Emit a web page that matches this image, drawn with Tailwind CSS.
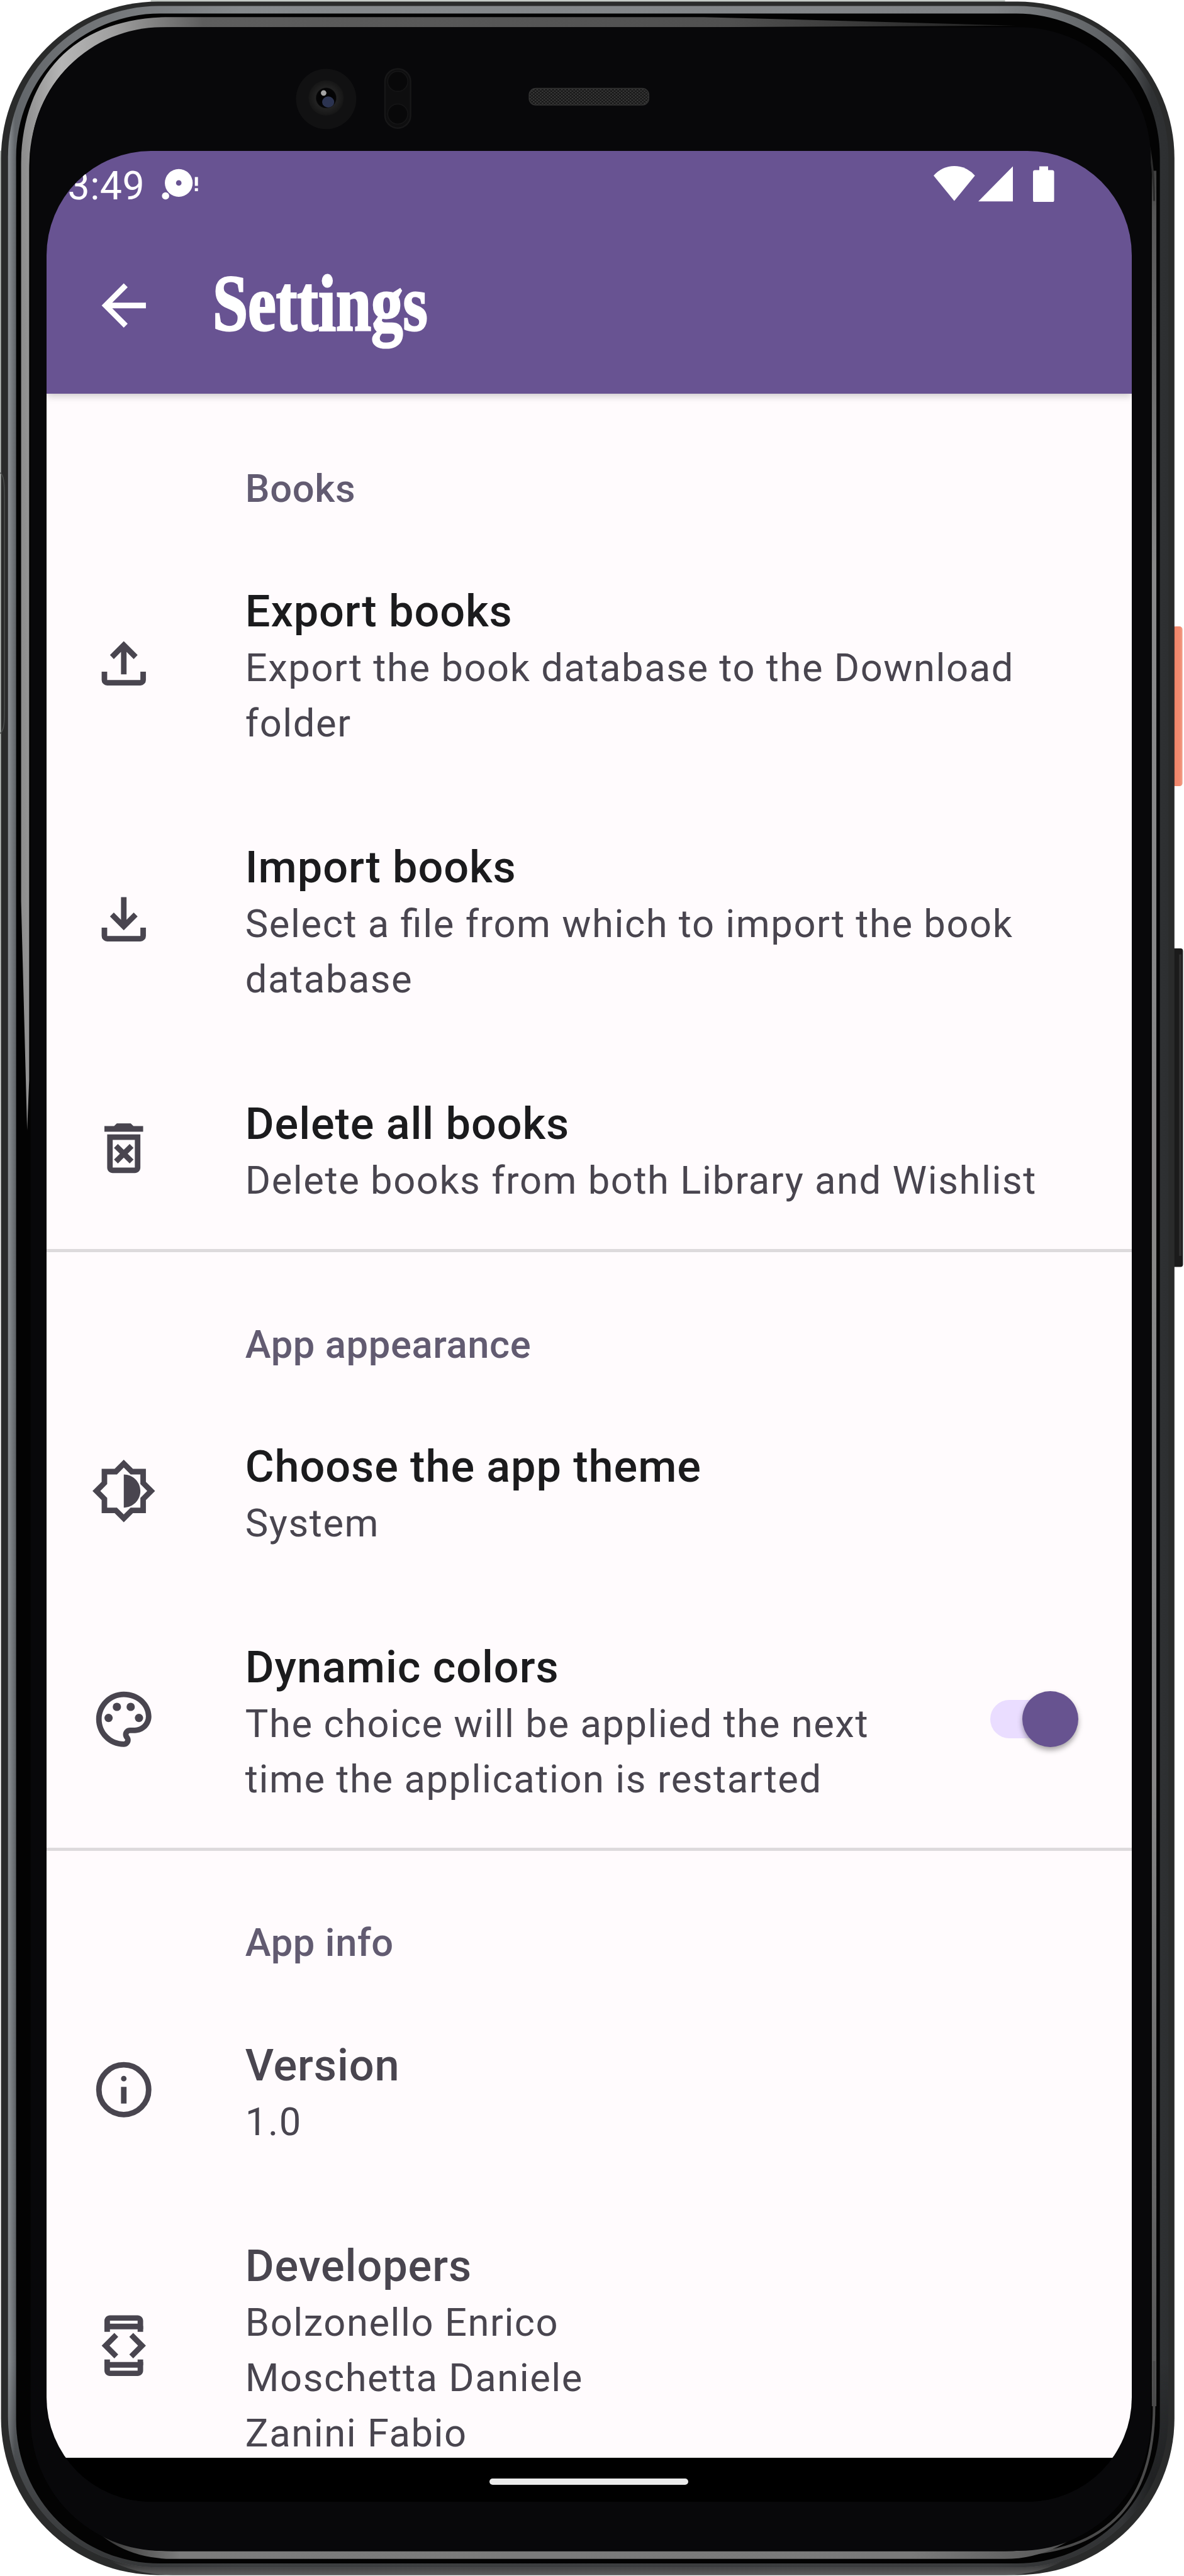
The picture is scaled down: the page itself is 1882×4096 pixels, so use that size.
<!DOCTYPE html>
<html lang="en">
<head>
<meta charset="utf-8">
<title>Settings</title>
<script src="https://cdn.jsdelivr.net/npm/@tailwindcss/browser@4"></script>
</head>
<body class="bg-white">
<div class="relative w-[1882px] h-[4096px] overflow-hidden font-[Roboto,sans-serif]">

  <!-- Phone body -->
  <svg class="absolute inset-0 w-full h-full" viewBox="0 0 2356 5128" preserveAspectRatio="none" fill="none">
    <defs>
      <linearGradient id="band" gradientUnits="userSpaceOnUse" x1="16" y1="0" x2="2326" y2="0">
        <stop offset="0" stop-color="#8d9296"/><stop offset=".006" stop-color="#62666a"/><stop offset=".05" stop-color="#6e7174"/><stop offset=".2" stop-color="#85898c"/><stop offset=".85" stop-color="#808386"/><stop offset=".96" stop-color="#5a5d60"/><stop offset=".985" stop-color="#2f3133"/><stop offset="1" stop-color="#2d2f31"/>
      </linearGradient>
      <linearGradient id="bandEnd" gradientUnits="userSpaceOnUse" x1="0" y1="4700" x2="0" y2="5112">
        <stop offset="0" stop-color="#000" stop-opacity="0"/><stop offset="1" stop-color="#000" stop-opacity=".55"/>
      </linearGradient>
      <linearGradient id="glassTop" gradientUnits="userSpaceOnUse" x1="42" y1="0" x2="2050" y2="0">
        <stop offset="0" stop-color="#8c8c8c"/><stop offset=".04" stop-color="#b5b5b5"/><stop offset=".09" stop-color="#a0a0a0"/><stop offset=".18" stop-color="#5e5e5e"/><stop offset=".7" stop-color="#505050"/><stop offset="1" stop-color="#1c1c1c"/>
      </linearGradient>
      <linearGradient id="glassBottom" gradientUnits="userSpaceOnUse" x1="150" y1="0" x2="2230" y2="0">
        <stop offset="0" stop-color="#1a1a1a"/><stop offset=".1" stop-color="#7c7c7c"/><stop offset=".8" stop-color="#7a7a7a"/><stop offset=".93" stop-color="#5c5c5c"/><stop offset="1" stop-color="#1a1a1a"/>
      </linearGradient>
      <linearGradient id="glassRight" gradientUnits="userSpaceOnUse" x1="0" y1="180" x2="0" y2="4990">
        <stop offset="0" stop-color="#111"/><stop offset=".05" stop-color="#555"/><stop offset=".2" stop-color="#888"/><stop offset=".7" stop-color="#868686"/><stop offset=".95" stop-color="#555"/><stop offset="1" stop-color="#111"/>
      </linearGradient>
      <linearGradient id="sheen" gradientUnits="userSpaceOnUse" x1="0" y1="300" x2="0" y2="2700">
        <stop offset="0" stop-color="#b8bdba"/><stop offset=".6" stop-color="#b8bdba"/><stop offset="1" stop-color="#fff"/>
      </linearGradient>
      <linearGradient id="edgeBottom" gradientUnits="userSpaceOnUse" x1="0" y1="5090" x2="0" y2="5127">
        <stop offset="0" stop-color="#1d1e1f"/><stop offset="1" stop-color="#606060"/>
      </linearGradient>
      <linearGradient id="power" gradientUnits="userSpaceOnUse" x1="2334" y1="0" x2="2353" y2="0">
        <stop offset="0" stop-color="#d9694f"/><stop offset=".25" stop-color="#f0866a"/><stop offset=".75" stop-color="#f28b70"/><stop offset="1" stop-color="#f0a08c"/>
      </linearGradient>
      <radialGradient id="lens"><stop offset="0" stop-color="#000"/><stop offset=".55" stop-color="#050506"/><stop offset=".6" stop-color="#222"/><stop offset="1" stop-color="#161616"/></radialGradient>
      <pattern id="mesh" width="7" height="6" patternUnits="userSpaceOnUse"><rect width="7" height="6" fill="#151515"/><rect width="3" height="3" fill="#3c3c3c"/><rect x="3.500" y="3" width="3" height="3" fill="#3c3c3c"/></pattern>
    </defs>
    <rect x="0" y="300" width="3" height="2400" fill="url(#sheen)"/>
    <rect x="300" y="0" width="1700" height="5" fill="#c5cbc7"/>
    <rect x="2333" y="1247" width="20" height="318" rx="6" fill="url(#power)"/>
    <rect x="2330" y="1888" width="24" height="634" rx="5" fill="#1b1b1b"/>
    <rect x="2346" y="1900" width="5" height="600" fill="#2e2e2e"/>
    <rect x="2" y="3" width="2335" height="5123" rx="312" fill="#2a2b2b"/>
    <path d="M150 5040Q220 5126 344 5126H2000Q2110 5126 2190 5040L2120 5080H220Z" fill="url(#edgeBottom)"/>
    <rect x="16" y="12" width="2309" height="5099" rx="300" fill="url(#band)"/>
    <rect x="16" y="12" width="2309" height="5099" rx="300" fill="url(#bandEnd)"/>
    <rect x="32" y="27" width="2276" height="5076" rx="286" fill="#030303"/>
    <path d="M2296.500 340V4790" stroke="url(#glassRight)" stroke-width="9"/>
    <path d="M2296.500 4700V4790Q2296 5086 2000 5086" stroke="#4a4a4a" stroke-width="5"/>
    <path d="M2235 170Q2296 250 2296.500 400" stroke="#2c2c2c" stroke-width="4"/>
    <path d="M42 1794V330C42 150 150 34 340 34H1400L2020 51L1400 54H345C180 54 58 160 58 340V2150L54 2250Z" fill="url(#glassTop)"/>
    <path d="M150 4990Q220 5094 344 5094H2000Q2130 5094 2230 4960Q2130 5078 2000 5079H344Q220 5079 150 4990Z" fill="url(#glassBottom)"/>
    <path d="M0 941C9 945 9 970 9 1000V1400C9 1435 9 1455 0 1460" stroke="#4a4d4c" stroke-width="2"/>
    <rect x="61" y="54" width="2229" height="5024" rx="262" fill="#08080a"/>
    <circle cx="649" cy="197" r="60" fill="#111112"/>
    <circle cx="649" cy="195" r="35" fill="url(#lens)"/>
    <ellipse cx="653" cy="203" rx="12" ry="11" fill="#2b3350"/>
    <circle cx="644" cy="185" r="5.500" fill="#a5a5a5"/>
    <rect x="766" y="137" width="51" height="118" rx="25.500" fill="#0e0e0f" stroke="#171718" stroke-width="3"/>
    <circle cx="791.500" cy="162" r="20" fill="#080809" stroke="#151516" stroke-width="2"/>
    <circle cx="791.500" cy="227" r="20" fill="#080809" stroke="#151516" stroke-width="2"/>
    <rect x="1053" y="176" width="238" height="33" rx="13" fill="url(#mesh)" stroke="#303030" stroke-width="2"/>
  </svg>

  <!-- Screen -->
  <div class="relative mt-[239.6px] ml-[73.5px] w-[1725.5px] h-[3738.4px] rounded-[166px] overflow-hidden bg-black flex flex-col">
    <header class="relative z-10 shrink-0 h-[386.7px] bg-[#685392] text-white shadow-[0_3px_12px_rgba(0,0,0,0.22)]">
      <div class="h-[105.4px] pt-[24px] pl-[34px] pr-[123px] flex items-start">
        <span class="w-[149.7px] text-[62.5px] leading-[64px] tracking-[0.5px]">3:49</span>
        <svg class="w-[58.3px] h-[57.5px]" viewBox="322 330 73 72" fill="#fff">
          <path fill-rule="evenodd" d="M356 336a27.700 27.700 0 1 1 0 55.400a27.700 27.700 0 0 1 0-55.400zM356 358.200a5.500 5.500 0 1 0 0 11a5.500 5.500 0 0 0 0-11z"/>
          <circle cx="329.700" cy="389.500" r="7.200"/>
          <path d="M388 352h6.200v17.500h-6.200zM388 374h6.200v6h-6.200z"/>
        </svg>
        <div class="ml-auto flex gap-[5.7px]">
          <svg class="w-[65.7px] h-[57.5px]" viewBox="1857.500 330 82.300 72" fill="#fff"><path d="M1898.700 399.500L1857.500 349Q1875 330 1898.700 330T1939.800 349Z"/></svg>
          <svg class="w-[55.200px] h-[57.5px]" viewBox="1947 330 69 72" fill="#fff"><path d="M1947 400.500H2016V330.500Z"/></svg>
          <svg class="ml-[26.300px] w-[33.600px] h-[57.5px]" viewBox="2056 330 42 72" fill="#fff"><path d="M2068.500 338V330.500H2086V338H2094Q2098 338 2098 342V398Q2098 402 2094 402H2060Q2056 402 2056 398V342Q2056 338 2060 338Z"/></svg>
        </div>
      </div>
      <div class="h-[281.3px] pl-[70.3px] flex items-center">
        <svg class="w-[105.5px] h-[105.5px]" viewBox="0 0 24 24" fill="#fff"><path d="M20 11H7.830l5.590-5.590L12 4l-8 8 8 8 1.410-1.410L7.830 13H20v-2z"/></svg>
        <h1 class="ml-[89px] pb-[5px] origin-left scale-x-[0.8] font-['Liberation_Serif',serif] font-bold text-[126px] leading-[140px] [-webkit-text-stroke:3px_white]">Settings</h1>
      </div>
    </header>

    <main class="h-[3281.400px] shrink-0 overflow-hidden bg-[#fffbfd] text-[#49454f] text-[61.5px] leading-[88px] tracking-[1.54px] [font-feature-settings:'liga']">
      <section class="pt-[107px]">
        <h2 class="pl-[316.3px] mb-[36.500px] font-medium tracking-[0.6px] text-[#625b71]">Books</h2>
        <div class="flex items-center py-[71.75px] pl-[70.3px]">
          <svg class="w-[105.5px] h-[105.5px] mb-[14px] shrink-0" viewBox="0 0 24 24" fill="currentColor"><path d="M11 16V7.850L8.400 10.450 7 9l5-5 5 5-1.400 1.450L13 7.850V16zM6 20q-.825 0-1.412-.587Q4 18.825 4 18v-3h2v3h12v-3h2v3q0 .825-.587 1.413Q18.825 20 18 20z"/></svg>
          <div class="ml-[140.500px]"><h3 class="-mt-[2px] mb-[2px] text-[70.3px] font-medium tracking-[0.9px] text-[#1b1b1d]">Export books</h3><p>Export the book database to the Download<br>folder</p></div>
        </div>
        <div class="flex items-center py-[71.75px] pl-[70.3px]">
          <svg class="w-[105.5px] h-[105.5px] mb-[14px] shrink-0" viewBox="0 0 24 24" fill="currentColor"><path d="M12 16l-5-5 1.400-1.450 2.600 2.600V4h2v8.150l2.600-2.600L17 11zM6 20q-.825 0-1.412-.587Q4 18.825 4 18v-3h2v3h12v-3h2v3q0 .825-.587 1.413Q18.825 20 18 20z"/></svg>
          <div class="ml-[140.500px]"><h3 class="-mt-[2px] mb-[2px] text-[70.3px] font-medium tracking-[0.9px] text-[#1b1b1d]">Import books</h3><p>Select a file from which to import the book<br>database</p></div>
        </div>
        <div class="flex items-center pt-[71.75px] pb-[65px] pl-[70.3px]">
          <svg class="w-[105.5px] h-[105.5px] mb-[14px] shrink-0" viewBox="0 0 24 24" fill="currentColor"><path d="M14.120 10.470L12 12.590l-2.130-2.120-1.410 1.410L10.590 14l-2.120 2.120 1.410 1.410L12 15.410l2.120 2.120 1.410-1.410L13.410 14l2.120-2.120zM15.500 4l-1-1h-5l-1 1H5v2h14V4zM6 19c0 1.100.9 2 2 2h8c1.100 0 2-.9 2-2V7H6zM8 9h8v10H8z"/></svg>
          <div class="ml-[140.500px]"><h3 class="-mt-[2px] mb-[2px] text-[70.3px] font-medium tracking-[0.9px] text-[#1b1b1d]">Delete all books</h3><p>Delete books from both Library and Wishlist</p></div>
        </div>
      </section>

      <section class="border-t-[5px] border-[#dddadc] pt-[103px]">
        <h2 class="pl-[316.3px] mb-[36.500px] font-medium tracking-[0.6px] text-[#625b71]">App appearance</h2>
        <div class="flex items-center py-[71.75px] pl-[70.3px]">
          <svg class="w-[105.5px] h-[105.5px] mb-[14px] shrink-0 overflow-visible" viewBox="0 0 24 24" fill="currentColor"><path d="M20 15.310L23.310 12 20 8.690V4h-4.690L12 .69 8.690 4H4v4.690L.69 12 4 15.310V20h4.690L12 23.310 15.310 20H20zM18 14.480V18h-3.520L12 20.480 9.520 18H6v-3.520L3.520 12 6 9.520V6h3.520L12 3.520 14.480 6H18v3.520L20.480 12zM12 6v12c3.310 0 6-2.690 6-6s-2.690-6-6-6z" fill-rule="evenodd"/></svg>
          <div class="ml-[140.500px]"><h3 class="-mt-[2px] mb-[2px] text-[70.3px] font-medium tracking-[0.9px] text-[#1b1b1d]">Choose the app theme</h3><p>System</p></div>
        </div>
        <div class="flex items-center pt-[71.75px] pb-[65px] pl-[70.3px] pr-[84.600px]">
          <svg class="w-[105.5px] h-[105.5px] mb-[15px] shrink-0" viewBox="0 0 24 24" fill="currentColor"><path d="M12 22C6.490 22 2 17.510 2 12S6.490 2 12 2s10 4.040 10 9c0 3.310-2.690 6-6 6h-1.770c-.28 0-.5.22-.5.5 0 .12.050.23.130.33.410.47.640 1.060.640 1.670A2.500 2.500 0 0 1 12 22zm0-18c-4.410 0-8 3.590-8 8s3.590 8 8 8c.28 0 .5-.22.5-.5a.54.54 0 0 0-.14-.35c-.41-.46-.63-1.050-.63-1.650a2.500 2.500 0 0 1 2.500-2.500H16c2.210 0 4-1.790 4-4 0-3.860-3.590-7-8-7z"/><circle cx="6.500" cy="11.500" r="1.500"/><circle cx="9.500" cy="7.500" r="1.500"/><circle cx="14.500" cy="7.500" r="1.500"/><circle cx="17.500" cy="11.500" r="1.500"/></svg>
          <div class="ml-[140.500px]"><h3 class="-mt-[2px] mb-[2px] text-[70.3px] font-medium tracking-[0.9px] text-[#1b1b1d]">Dynamic colors</h3><p>The choice will be applied the next<br>time the application is restarted</p></div>
          <div class="ml-auto mb-[16px] flex h-[60.700px] w-[140.800px] items-center justify-end rounded-full bg-[#eaddff]">
            <span class="size-[89.500px] shrink-0 rounded-full bg-[#675390] shadow-[0_5px_8px_rgba(0,0,0,0.35)]"></span>
          </div>
        </div>
      </section>

      <section class="border-t-[5px] border-[#dddadc] pt-[102px]">
        <h2 class="pl-[316.3px] mb-[36.500px] font-medium tracking-[0.6px] text-[#625b71]">App info</h2>
        <div class="flex items-center py-[71.75px] pl-[70.3px]">
          <svg class="w-[105.5px] h-[105.5px] mb-[14px] shrink-0" viewBox="0 0 24 24" fill="currentColor"><path d="M11 17h2v-6h-2zM12 9q.425 0 .713-.288Q13 8.425 13 8t-.287-.713Q12.425 7 12 7t-.712.287Q11 7.575 11 8t.288.712Q11.575 9 12 9z"/><circle cx="12" cy="12" r="9" fill="none" stroke="currentColor" stroke-width="2"/></svg>
          <div class="ml-[140.500px]"><h3 class="-mt-[2px] mb-[2px] text-[70.3px] font-medium tracking-[0.9px]">Version</h3><p>1.0</p></div>
        </div>
        <div class="flex items-center py-[71.75px] pl-[70.3px]">
          <svg class="w-[105.5px] h-[105.5px] mb-[14px] shrink-0 overflow-visible" viewBox="0 0 24 24" fill="currentColor"><path d="M7 5h10v2h2V3c0-1.100-.9-1.990-2-1.990L7 1c-1.100 0-2 .9-2 2v4h2zM15.410 16.590L20 12l-4.590-4.590L14 8.830 17.170 12 14 15.170zM10 15.170L6.830 12 10 8.830 8.590 7.410 4 12l4.590 4.590zM17 19H7v-2H5v4c0 1.100.9 2 2 2h10c1.100 0 2-.9 2-2v-4h-2z"/><path d="M5 4.900h14v1.200H5zM5 17.900h14v1.200H5z"/><path d="M7 2.950h10v1.100H7zM7 19.950h10v1.100H7z" fill="#fffbfd"/></svg>
          <div class="ml-[140.500px]"><h3 class="-mt-[2px] mb-[2px] text-[70.3px] font-medium tracking-[0.9px]">Developers</h3><p>Bolzonello Enrico<br>Moschetta Daniele<br>Zanini Fabio</p></div>
        </div>
      </section>
    </main>

    <div class="flex-1 bg-black flex justify-center pt-[33.500px]">
      <span class="h-[9.600px] w-[316px] rounded-full bg-[#ebebeb]"></span>
    </div>
  </div>
</div>
</body>
</html>
